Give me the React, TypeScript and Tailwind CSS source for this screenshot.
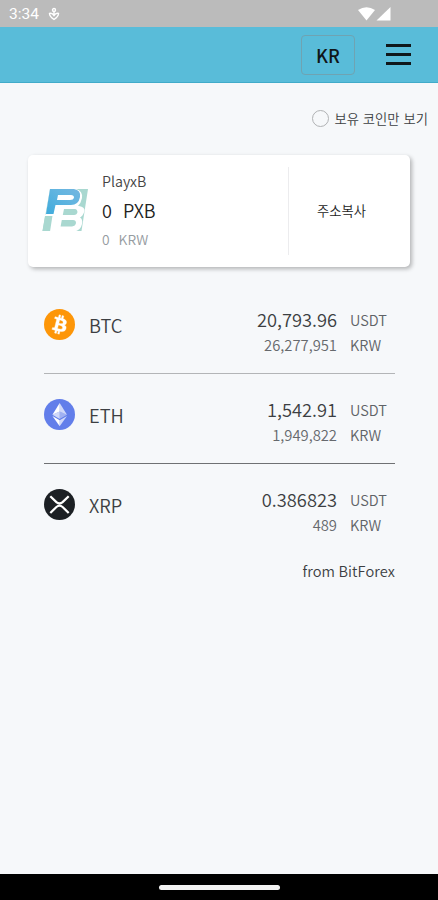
import type { ReactNode } from 'react';

interface Coin {
  symbol: string;
  usdt: string;
  krw: string;
  icon: ReactNode;
  line: string;
}

const BtcIcon = () => (
  <svg viewBox="0 0 32 32" className="w-[31px] h-[31px]">
    <circle cx="16" cy="16" r="16" fill="#fd9608" />
    <path
      fill="#fff"
      stroke="#fff"
      strokeWidth=".4"
      d="M23.189 14.02c.314-2.096-1.283-3.223-3.465-3.975l.708-2.84-1.728-.43-.69 2.765c-.454-.114-.92-.22-1.385-.326l.695-2.783L15.596 6l-.708 2.839c-.376-.086-.746-.17-1.104-.26l.002-.009-2.384-.595-.46 1.846s1.283.294 1.256.312c.7.175.826.638.805 1.006l-.806 3.235c.048.012.11.03.18.057l-.183-.045-1.13 4.532c-.086.212-.303.531-.793.41.018.025-1.256-.313-1.256-.313l-.858 1.978 2.25.561c.418.105.828.215 1.231.318l-.715 2.872 1.727.43.708-2.84c.472.127.93.245 1.378.357l-.706 2.828 1.728.43.715-2.866c2.948.558 5.164.333 6.097-2.333.752-2.146-.037-3.385-1.588-4.192 1.13-.26 1.98-1.003 2.207-2.538zm-3.95 5.538c-.533 2.147-4.148.986-5.32.695l.95-3.805c1.172.293 4.929.872 4.37 3.11zm.535-5.569c-.487 1.953-3.495.96-4.47.717l.86-3.45c.975.243 4.118.696 3.61 2.733z"
    />
  </svg>
);

const EthIcon = () => (
  <svg viewBox="0 0 32 32" className="w-[31px] h-[31px]">
    <circle cx="16" cy="16" r="16" fill="#627eea" />
    <g fill="#fff">
      <path fillOpacity=".7" d="M16.200 4v8.87l7.5 3.35z" />
      <path d="M16.200 4L8.700 16.22l7.5-3.35z" />
      <path fillOpacity=".7" d="M16.200 21.97v6.03L23.7 17.6z" />
      <path d="M16.200 28v-6.03L8.700 17.6z" />
      <path fillOpacity=".4" d="M16.200 20.57l7.5-4.35-7.5-3.35z" />
      <path fillOpacity=".7" d="M8.700 16.22l7.5 4.35v-7.7z" />
    </g>
  </svg>
);

const XrpIcon = () => (
  <svg viewBox="0 0 32 32" className="w-[31px] h-[31px]">
    <circle cx="16" cy="16" r="16" fill="#1c2024" />
    <g fill="none" stroke="#fff" strokeWidth="2.300">
      <path d="M6.500 7.500L12.800 13.600Q16 16.300 19.200 13.600L25.500 7.500" />
      <path d="M6.500 24.700L12.800 18.600Q16 15.900 19.200 18.600L25.500 24.700" />
    </g>
  </svg>
);

const PxbLogo = () => (
  <svg viewBox="0 0 46 44" className="w-[46px] h-[44px] shrink-0">
    <defs>
      <linearGradient id="pxb-blue" x1="0" y1="1" x2="1" y2="0">
        <stop offset="0" stopColor="#3fabdc" />
        <stop offset="0.6" stopColor="#62b5e0" />
        <stop offset="1" stopColor="#74b6e0" />
      </linearGradient>
    </defs>
    <path fill="#a9d8d0" d="M8 0H46L39.500 42H0.500z" />
    <path fill="#fff" d="M8 0H34Q41 2 40 9Q39 14 36 17L34 27H0V25.500H4z" />
    <path fill="#a9d8d0" d="M3 27H10L8 42H0.500z" />
    {/* lower letter */}
    <path fill="#fff" d="M12 17H37Q43 18 42.500 22Q41 27 38 28.500Q41 30 40 35Q38.500 42 32 42.500H8z" />
    <path fill="#a9d8d0" d="M22 20L20.800 26H32Q35 26 35.500 23Q35 20 33 20zM19.800 31L18.600 37.500H30Q33.500 37 34 34Q34 31 31 31z" />
    {/* upper letter */}
    <path
      fill="url(#pxb-blue)"
      fillRule="evenodd"
      d="M8 0H32Q39 1 38 8Q36.500 16 29 16H13.500L11.500 25H4zM16 6L15 11H28Q31.500 11 32 8.500Q32 6 29 6z"
    />
  </svg>
);

const COINS: Coin[] = [
  { symbol: 'BTC', usdt: '20,793.96', krw: '26,277,951', icon: <BtcIcon />, line: 'border-[#b3b5b7]' },
  { symbol: 'ETH', usdt: '1,542.91', krw: '1,949,822', icon: <EthIcon />, line: 'border-[#6f7173]' },
  { symbol: 'XRP', usdt: '0.386823', krw: '489', icon: <XrpIcon />, line: 'border-transparent' },
];

function StatusBar() {
  return (
    <div className="h-[27px] shrink-0 bg-[#bbbbbb] flex items-center text-white pl-[9px] pr-[46px] pt-px">
      <span className="font-['Roboto',sans-serif] font-normal text-[15.500px] leading-none pt-[2px]">3:34</span>
      <svg viewBox="0 0 12 14" className="w-3 h-3.5 ml-[9px]" fill="none" stroke="#fff" strokeWidth="1.4">
        <circle cx="6" cy="3" r="1.500" />
        <path d="M6 5v3M1.500 6.500Q1.500 9.500 6 12.500Q10.500 9.500 10.500 6.500Q8 5.500 6 8.500Q4 5.500 1.500 6.500z" />
      </svg>
      <svg viewBox="0 0 34 14" className="w-[34px] h-3.5 ml-auto" fill="#fff">
        <path d="M0 3Q8.500-2.500 17 3L8.500 13.500z" />
        <path d="M32.500 0V13.500H18.500z" />
      </svg>
    </div>
  );
}

function Header() {
  return (
    <header className="h-14 shrink-0 bg-[#59bcd9] border-b border-[#41abc9] flex items-center justify-end pr-[27px]">
      <button className="w-[54px] h-10 rounded border border-[#6fa3b2] text-[18px] font-medium text-[#101619] leading-none">
        KR
      </button>
      <button className="ml-[31px] w-[25px] flex flex-col gap-[6px]">
        <span className="h-[3px] bg-[#10181b]" />
        <span className="h-[3px] bg-[#10181b]" />
        <span className="h-[3px] bg-[#10181b]" />
      </button>
    </header>
  );
}

function BalanceCard() {
  return (
    <section className="mx-7 h-28 rounded-[5px] bg-white shadow-[2px_2px_4px_rgba(0,0,0,0.28)] flex items-center">
      <div className="flex-1 flex items-center pl-[14px]">
        <PxbLogo />
        <div className="ml-[14px] pb-[3px] text-[#444]">
          <p className="text-[14.300px] leading-[26px]">PlayxB</p>
          <p className="text-[18px] leading-[32px] text-[#222]">0<span className="ml-[11px]">PXB</span></p>
          <p className="text-[13.800px] leading-[26px] text-[#969ca1]">0<span className="ml-[9px]">KRW</span></p>
        </div>
      </div>
      <div className="w-[122px] h-[88px] border-l border-[#ececee] flex items-center pl-7">
        <button className="text-[13.300px] text-[#222]">주소복사</button>
      </div>
    </section>
  );
}

function CoinRow({ symbol, usdt, krw, icon, line }: Coin) {
  return (
    <li className={`h-[90px] pt-6 border-b flex items-start text-[#3c3f42] ${line}`}>
      <div className="h-[33px] flex items-center">
        {icon}
        <span className="ml-[14px] pt-px text-[18.300px] leading-none">{symbol}</span>
      </div>
      <div className="ml-auto -mt-px text-right">
        <p className="text-[18.300px] leading-[25px]">{usdt}</p>
        <p className="text-[14.800px] leading-[25px] text-[#66696d]">{krw}</p>
      </div>
      <div className="w-[58px] pl-[13px] -mt-px text-[14.500px] leading-[25px] text-[#606367]">
        <p>USDT</p>
        <p>KRW</p>
      </div>
    </li>
  );
}

export default function App() {
  return (
    <div className="w-full h-[900px] flex flex-col overflow-hidden bg-[#f6f8fa] font-['Noto_Sans_CJK_KR',sans-serif] font-[350]">
      <StatusBar />
      <Header />

      <main className="flex-1">
        <label className="h-[72px] pr-[10px] pb-px flex items-center justify-end gap-[5px] text-[13.300px] text-[#3c3f42]">
          <span className="w-[17px] h-[17px] rounded-full border border-[#b0b2b4]" />
          <span className="[word-spacing:1px]">보유 코인만 보기</span>
        </label>

        <BalanceCard />

        <ul className="mt-[17px] ml-11 mr-[43px]">
          {COINS.map((coin) => (
            <CoinRow key={coin.symbol} {...coin} />
          ))}
        </ul>
        <p className="mt-[5px] mr-[43px] text-right text-[14.600px] tracking-[0.1px] leading-6 text-[#3c3f42]">from BitForex</p>
      </main>

      {/* Gesture navigation */}
      <div className="h-[26px] shrink-0 bg-black flex items-center justify-center">
        <span className="w-[121px] h-[5px] rounded-full bg-[#f3f3f3]" />
      </div>
    </div>
  );
}
